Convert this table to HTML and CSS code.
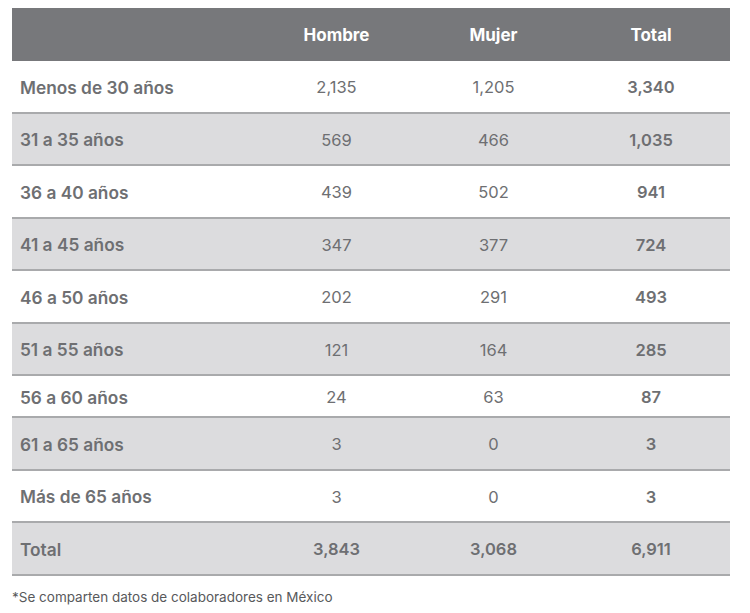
FILE: index.html
```html
<!DOCTYPE html>
<html lang="es">
<head>
<meta charset="utf-8">
<link rel="stylesheet" href="styles.css">
</head>
<body>
<div class="table">
  <div class="row head"><div class="label"></div><div>Hombre</div><div>Mujer</div><div>Total</div></div>
  <div class="row"><div class="label">Menos de 30 años</div><div>2,135</div><div>1,205</div><div class="tot">3,340</div></div>
  <div class="row alt"><div class="label">31 a 35 años</div><div>569</div><div>466</div><div class="tot">1,035</div></div>
  <div class="row"><div class="label">36 a 40 años</div><div>439</div><div>502</div><div class="tot">941</div></div>
  <div class="row alt"><div class="label">41 a 45 años</div><div>347</div><div>377</div><div class="tot">724</div></div>
  <div class="row"><div class="label">46 a 50 años</div><div>202</div><div>291</div><div class="tot">493</div></div>
  <div class="row alt"><div class="label">51 a 55 años</div><div>121</div><div>164</div><div class="tot">285</div></div>
  <div class="row short"><div class="label">56 a 60 años</div><div>24</div><div>63</div><div class="tot">87</div></div>
  <div class="row alt"><div class="label">61 a 65 años</div><div>3</div><div>0</div><div class="tot">3</div></div>
  <div class="row"><div class="label">Más de 65 años</div><div>3</div><div>0</div><div class="tot">3</div></div>
  <div class="row alt total"><div class="label">Total</div><div>3,843</div><div>3,068</div><div class="tot">6,911</div></div>
</div>
<p class="note">*Se comparten datos de colaboradores en México</p>
</body>
</html>
```

FILE: styles.css
```css
* { box-sizing: border-box; }
html, body { margin: 0; padding: 0; background: #fff; }
body {
  font-family: Inter, "Noto Sans", "Liberation Sans", sans-serif;
  color: #6e6f72;
}
.table {
  width: 718px;
  margin: 8px 0 0 12px;
}
.row {
  display: grid;
  grid-template-columns: 246px 157px 157px 158px;
  align-items: center;
  height: 52.5px;
  padding-top: 2px;
  border-bottom: 2px solid #a9aaac;
  font-size: 16.5px;
  background: #fff;
}
.row > div { text-align: center; }
.row > .label {
  text-align: left;
  padding-left: 8px;
  font-weight: 600;
  font-size: 17.3px;
}
.row .tot { font-weight: 600; }
.head {
  height: 53px;
  padding-top: 1px;
  background: #77787b;
  color: #fff;
  font-weight: 700;
  font-size: 17px;
  border-bottom: none;
}
.alt { background: #dcdcde; }
.short { height: 42px; }
.total > div { font-weight: 600; }
.note {
  margin: 13px 0 0 12px;
  font-size: 13.5px;
  color: #58595b;
}
```
